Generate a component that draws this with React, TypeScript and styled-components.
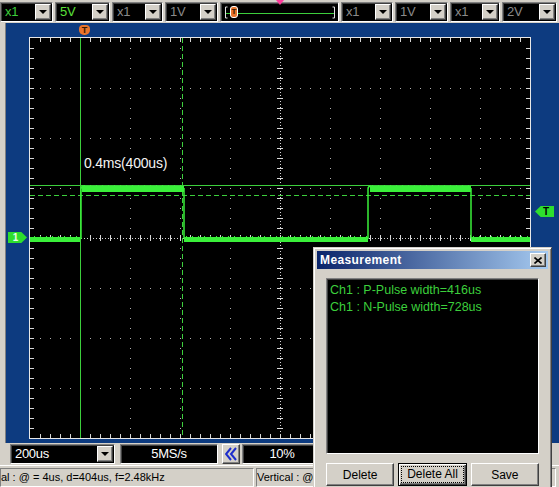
import styled, { createGlobalStyle } from "styled-components"

const GlobalStyle = createGlobalStyle`
html, body {
  margin: 0;
  padding: 0;
}
body {
  background: #d4d0c8;
  font-family: "Liberation Sans", Arial, sans-serif;
}
`

const Screen = styled.div`
position: relative;
width: 559px;
height: 487px;
overflow: hidden;
display: flex;
flex-direction: column;
background: #d4d0c8;
`

/* ---------- top toolbar ---------- */

const TopBar = styled.div`
display: flex;
flex-direction: row;
align-items: center;
gap: 2px;
height: 23px;
padding-top: 1px;
box-sizing: border-box;
`

const Sunken = styled.div<{ $w: number }>`
position: relative;
width: ${p => p.$w}px;
height: 20px;
box-sizing: border-box;
display: flex;
align-items: center;
background: #000;
border-style: solid;
border-width: 1px;
border-color: #808080 #fff #fff #808080;
box-shadow: inset 1px 1px 0 #404040;
`

const ComboText = styled.span<{ $c: string; $center?: boolean }>`
flex: 1;
padding-left: ${p => (p.$center ? 0 : 4)}px;
text-align: ${p => (p.$center ? "center" : "left")};
color: ${p => p.$c};
font-size: 13px;
letter-spacing: -0.3px;
line-height: 18px;
`

const DropBtn = styled.span`
width: 16px;
height: 16px;
margin-right: 1px;
box-sizing: border-box;
display: flex;
align-items: center;
justify-content: center;
background: #d4d0c8;
border-style: solid;
border-width: 1px;
border-color: #fff #404040 #404040 #fff;
box-shadow: inset -1px -1px 0 #808080;
`

const DownArrow = styled.span`
width: 0;
height: 0;
border-left: 4px solid transparent;
border-right: 4px solid transparent;
border-top: 4px solid #000;
`

const SliderTrack = styled.svg`
display: block;
`

const TriggerTag = styled.span<{ $left: number }>`
position: absolute;
left: ${p => p.$left}px;
top: 3px;
width: 8px;
height: 12px;
box-sizing: border-box;
border: 1px solid #fff;
border-radius: 3px;
background: #e8742c;
color: #3a1a00;
font-size: 8px;
font-weight: bold;
line-height: 10px;
text-align: center;
`

const PinkPointer = styled.span`
position: absolute;
left: 55px;
top: -3px;
width: 0;
height: 0;
border-left: 4px solid transparent;
border-right: 4px solid transparent;
border-top: 5px solid #ff3c9c;
`

function Combo({ w, text, color }: { w: number; text: string; color: string }) {
    return (
        <Sunken $w={w}>
            <ComboText $c={color}>{text}</ComboText>
            <DropBtn><DownArrow /></DropBtn>
        </Sunken>
    )
}

/* ---------- scope area ---------- */

const ScopePanel = styled.div`
position: relative;
height: 420px;
box-sizing: border-box;
background: #0d3b80;
border-left: 5px solid #d4d0c8;
box-shadow: inset 1px 0 0 #808080;
padding: 14px 0 0 24px;
`

const Plot = styled.div`
width: 500px;
height: 400px;
background: #000;
border: 1px solid #e8e8e8;
`

const PlotSvg = styled.svg`
display: block;
`

const ChannelTag = styled.span<{ $left: number; $top: number; $dir: "right" | "left" }>`
position: absolute;
left: ${p => p.$left}px;
top: ${p => p.$top}px;
width: 19px;
height: 11px;
background: #2ede2e;
clip-path: ${p =>
    p.$dir === "right"
        ? "polygon(0 0, 70% 0, 100% 50%, 70% 100%, 0 100%)"
        : "polygon(30% 0, 100% 0, 100% 100%, 30% 100%, 0 50%)"};
color: ${p => (p.$dir === "right" ? "#eaffea" : "#000")};
font-size: 10px;
font-weight: bold;
line-height: 11px;
text-align: center;
padding-left: ${p => (p.$dir === "left" ? 3 : 0)}px;
padding-right: ${p => (p.$dir === "right" ? 4 : 0)}px;
box-sizing: border-box;
`

const TopTrigger = styled.span`
position: absolute;
left: 74px;
top: 2px;
width: 11px;
height: 10px;
border-radius: 4px 4px 5px 5px;
background: #e8742c;
color: #3a1a00;
font-size: 9px;
font-weight: bold;
line-height: 10px;
text-align: center;
`

const GREEN = "#3af03a"
const CURSOR = "#3ccf3c"

function gridDots() {
    let d = ""
    for (let k = 1; k < 10; k++) {
        if (k === 5) continue
        for (let j = 1; j < 40; j++) d += `M${50 * k} ${10 * j + 0.5}h1`
    }
    for (let k = 1; k < 8; k++) {
        if (k === 4) continue
        for (let i = 1; i < 50; i++) d += `M${10 * i} ${50 * k + 0.5}h1`
    }
    return d
}

function edgeTicks() {
    let d = ""
    for (let i = 1; i < 50; i++) {
        const x = 10 * i + 0.5
        d += `M${x} 0v4M${x} 400v-4`
        d += `M${x} 197v6`
    }
    for (let j = 1; j < 40; j++) {
        const y = 10 * j + 0.5
        d += `M0 ${y}h4M500 ${y}h-4`
        d += `M247 ${y}h6`
    }
    return d
}

function noise(x0: number, x1: number, y: number, seed: number) {
    let d = ""
    let s = seed
    for (let x = x0; x < x1; x += 2) {
        s = (s * 9301 + 49297) % 233280
        if (s % 3 === 0) d += `M${x} ${y}h1`
    }
    return d
}

const dots = gridDots()
const ticks = edgeTicks()

function ScopeScreen() {
    const lows: [number, number][] = [[0, 50], [154, 338], [441, 500]]
    const highs: [number, number][] = [[50, 154], [338, 441]]
    return (
        <Plot>
            <PlotSvg width={500} height={400} viewBox="0 0 500 400">
                <path d={dots} stroke="#b0b0b0" strokeWidth={1} />
                <path d={ticks} stroke="#d8d8d8" strokeWidth={1} />
                <line x1={0} y1={200.5} x2={500} y2={200.5} stroke="#d8d8d8" strokeDasharray="1 2" />
                <line x1={250.5} y1={0} x2={250.5} y2={400} stroke="#d8d8d8" strokeDasharray="1 2" />

                <line x1={50.5} y1={0} x2={50.5} y2={400} stroke={CURSOR} />
                <line x1={152.5} y1={0} x2={152.5} y2={400} stroke={CURSOR} strokeDasharray="5 3" />
                <line x1={0} y1={147.5} x2={500} y2={147.5} stroke={CURSOR} />
                <line x1={0} y1={157.5} x2={500} y2={157.5} stroke={CURSOR} strokeDasharray="5 3" />

                {lows.map(([a, b]) => (
                    <rect key={"l" + a} x={a} y={199} width={b - a} height={5} fill={GREEN} />
                ))}
                {highs.map(([a, b]) => (
                    <rect key={"h" + a} x={a + 2} y={148} width={b - a - 2} height={6} fill={GREEN} />
                ))}
                <path
                    d={noise(52, 154, 147.5, 7) + noise(340, 441, 147.5, 13) + noise(0, 50, 198.5, 3) + noise(156, 338, 198.5, 5) + noise(443, 500, 198.5, 11)}
                    stroke={GREEN}
                />
                <path d="M51 201V151q0-3 3-3" stroke={GREEN} strokeWidth={1.5} fill="none" />
                <path d="M154 150V199q0 2 2 2" stroke={GREEN} strokeWidth={1.5} fill="none" />
                <path d="M338 201V151q0-3 3-3" stroke={GREEN} strokeWidth={1.5} fill="none" />
                <path d="M441 150V199q0 2 2 2" stroke={GREEN} strokeWidth={1.5} fill="none" />

                <text x={54} y={130} fill="#f4f4f4" fontSize={14} fontFamily="Liberation Sans, Arial, sans-serif" letterSpacing={-0.2}>
                    0.4ms(400us)
                </text>
            </PlotSvg>
        </Plot>
    )
}

/* ---------- bottom bar + status ---------- */

const BottomBar = styled.div`
display: flex;
flex-direction: row;
align-items: center;
gap: 5px;
height: 22px;
padding-left: 10px;
box-sizing: border-box;
`

const NavButton = styled.span`
width: 18px;
height: 20px;
box-sizing: border-box;
display: flex;
align-items: center;
justify-content: center;
background: #d4d0c8;
border-style: solid;
border-width: 1px;
border-color: #fff #404040 #404040 #fff;
box-shadow: inset -1px -1px 0 #808080;
margin-left: -1px;
margin-right: -3px;
`

const StatusBar = styled.div`
display: flex;
flex-direction: row;
gap: 2px;
height: 22px;
padding-top: 2px;
box-sizing: border-box;
border-top: 1px solid #fff;
`

const StatusPanel = styled.div<{ $w: number }>`
width: ${p => p.$w}px;
height: 19px;
box-sizing: border-box;
border-style: solid;
border-width: 1px;
border-color: #808080 #fff #fff #808080;
font-size: 11px;
line-height: 17px;
color: #000;
white-space: nowrap;
overflow: hidden;
padding-left: 0;
`

/* ---------- measurement window ---------- */

const Window = styled.div`
position: absolute;
left: 313px;
top: 247px;
width: 239px;
height: 250px;
box-sizing: border-box;
background: #d4d0c8;
border-style: solid;
border-width: 1px;
border-color: #d4d0c8 #404040 #404040 #d4d0c8;
box-shadow: inset 1px 1px 0 #fff, inset -1px -1px 0 #808080;
padding: 3px;
display: flex;
flex-direction: column;
`

const TitleBar = styled.div`
height: 18px;
display: flex;
align-items: center;
justify-content: space-between;
background: linear-gradient(to right, #0a246a, #a6caf0);
padding: 0 2px 0 3px;
`

const TitleText = styled.span`
color: #fff;
font-size: 12px;
font-weight: bold;
letter-spacing: 0.4px;
`

const CloseBtn = styled.span`
width: 16px;
height: 14px;
box-sizing: border-box;
display: flex;
align-items: center;
justify-content: center;
background: #d4d0c8;
border-style: solid;
border-width: 1px;
border-color: #fff #404040 #404040 #fff;
box-shadow: inset -1px -1px 0 #808080;
`

const WindowBody = styled.div`
display: flex;
flex-direction: column;
gap: 9px;
padding: 9px 9px 0 9px;
`

const Output = styled.div`
height: 176px;
box-sizing: border-box;
background: #000;
border-style: solid;
border-width: 1px;
border-color: #808080 #fff #fff #808080;
box-shadow: inset 1px 1px 0 #404040;
padding: 3px 3px;
color: #3ccf3c;
font-size: 12.5px;
line-height: 17px;
`

const ButtonRow = styled.div`
display: flex;
flex-direction: row;
gap: 4px;
`

const Button = styled.button<{ $w: number; $focus?: boolean }>`
width: ${p => p.$w}px;
height: 23px;
box-sizing: border-box;
padding: 0;
background: #d4d0c8;
font-family: "Liberation Sans", Arial, sans-serif;
font-size: 12px;
color: #000;
border-style: solid;
border-width: 1px;
border-color: ${p => (p.$focus ? "#000" : "#fff #404040 #404040 #fff")};
box-shadow: ${p =>
    p.$focus
        ? "inset 1px 1px 0 #fff, inset -1px -1px 0 #404040, inset -2px -2px 0 #808080"
        : "inset -1px -1px 0 #808080"};
display: flex;
align-items: center;
justify-content: center;
`

const FocusRing = styled.span`
flex: 1;
margin: 3px;
height: 15px;
line-height: 15px;
outline: 1px dotted #000;
`

export default function App() {
    return (
        <Screen>
            <GlobalStyle />
            <TopBar>
                <Combo w={53} text="x1" color="#3ccf3c" />
                <Combo w={55} text="5V" color="#5ae03a" />
                <Combo w={51} text="x1" color="#8a8a8a" />
                <Combo w={53} text="1V" color="#8a8a8a" />
                <Sunken $w={119}>
                    <SliderTrack width={117} height={18} viewBox="0 0 117 18">
                        <path d="M4.5 4v11M4.5 4h2M4.5 15h2" stroke="#e0e0e0" />
                        <path d="M113.5 4v11M113.5 4h-2M113.5 15h-2" stroke="#e0e0e0" />
                        <line x1={5} y1={10.5} x2={113} y2={10.5} stroke="#3ccf3c" />
                    </SliderTrack>
                    <TriggerTag $left={9}>T</TriggerTag>
                    <PinkPointer />
                </Sunken>
                <Combo w={52} text="x1" color="#8a8a8a" />
                <Combo w={53} text="1V" color="#8a8a8a" />
                <Combo w={50} text="x1" color="#8a8a8a" />
                <Combo w={55} text="2V" color="#8a8a8a" />
            </TopBar>

            <ScopePanel>
                <ScopeScreen />
                <TopTrigger>T</TopTrigger>
                <ChannelTag $left={3} $top={209} $dir="right">1</ChannelTag>
                <ChannelTag $left={530} $top={183} $dir="left">T</ChannelTag>
            </ScopePanel>

            <BottomBar>
                <Combo w={105} text="200us" color="#fff" />
                <Sunken $w={98}>
                    <ComboText $c="#fff" $center>5MS/s</ComboText>
                </Sunken>
                <NavButton>
                    <svg width={12} height={14} viewBox="0 0 12 14">
                        <path d="M6 1L1 7l5 6M11 1L6 7l5 6" stroke="#1c2ccc" strokeWidth={2} fill="none" />
                    </svg>
                </NavButton>
                <Sunken $w={80}>
                    <ComboText $c="#fff" $center>10%</ComboText>
                </Sunken>
            </BottomBar>

            <StatusBar>
                <StatusPanel $w={254}>al : @ = 4us, d=404us, f=2.48kHz</StatusPanel>
                <StatusPanel $w={300}>Vertical : @</StatusPanel>
            </StatusBar>

            <Window>
                <TitleBar>
                    <TitleText>Measurement</TitleText>
                    <CloseBtn>
                        <svg width={8} height={7} viewBox="0 0 8 7">
                            <path d="M0.5 0.5l7 6M7.5 0.5l-7 6" stroke="#000" strokeWidth={1.6} />
                        </svg>
                    </CloseBtn>
                </TitleBar>
                <WindowBody>
                    <Output>
                        <div>Ch1 : P-Pulse width=416us</div>
                        <div>Ch1 : N-Pulse width=728us</div>
                    </Output>
                    <ButtonRow>
                        <Button $w={69}>Delete</Button>
                        <Button $w={69} $focus><FocusRing>Delete All</FocusRing></Button>
                        <Button $w={69}>Save</Button>
                    </ButtonRow>
                </WindowBody>
            </Window>
        </Screen>
    )
}
